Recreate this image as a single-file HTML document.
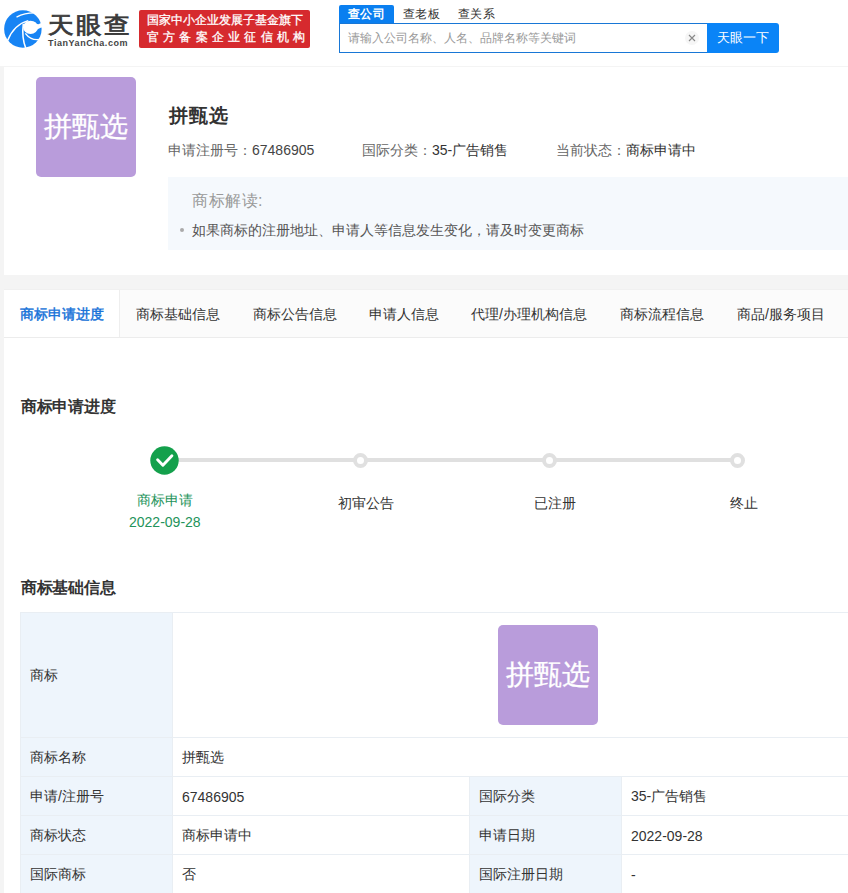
<!DOCTYPE html>
<html><head><meta charset="utf-8">
<style>
*{margin:0;padding:0;box-sizing:border-box}
html,body{width:848px;height:893px;overflow:hidden;background:#fff;font-family:"Liberation Sans",sans-serif;color:#333}
.a{position:absolute;white-space:nowrap}
#hdr{position:absolute;left:0;top:0;width:848px;height:66px;background:#fff}
#pagebg{position:absolute;left:0;top:66px;width:848px;height:827px;background:#f4f4f4}
#card1{position:absolute;left:4px;top:67px;width:844px;height:208px;background:#fff}
#tabs{position:absolute;left:4px;top:289px;width:844px;height:49px;background:#fafafa;border-top:1px solid #f0f0f0;border-bottom:1px solid #ececec;background:#fbfbfb}
#main{position:absolute;left:4px;top:338px;width:844px;height:555px;background:#fff}
.logo{position:absolute;width:100px;height:100px;border-radius:5px;background:#b99cdb;color:#fff;font-size:28px;text-align:center;line-height:100px;-webkit-text-stroke:0.3px #fff}
.tab{position:absolute;top:0;height:47px;line-height:47px;padding-top:0.6px;font-size:14px;color:#333}
.sec{position:absolute;font-size:16px;font-weight:bold;color:#333}
table{position:absolute;left:20px;top:612px;border-collapse:collapse;width:905px;font-size:14px}
td{border:1px solid #e9eef3;height:39px;padding-left:9px;padding-top:2px;color:#333}
td.l{background:#eef5fc;width:152px}
</style></head><body>
<div id="hdr">
  <svg class="a" style="left:0;top:5px" width="50" height="50" viewBox="0 0 848 848">
    <circle cx="388" cy="407" r="318" fill="#1784f4"/>
    <ellipse cx="518" cy="378" rx="126" ry="112" fill="#fff"/>
    <path d="M600 320 L650 325 L740 290 L740 375 L690 385 L620 420 Z" fill="#fff"/>
    <path d="M130 600 Q240 330 480 265" stroke="#fff" stroke-width="26" fill="none"/>
    <path d="M395 320 Q365 560 440 740" stroke="#fff" stroke-width="26" fill="none"/>
    <path d="M280 205 Q420 135 580 135" stroke="#fff" stroke-width="22" fill="none"/>
    <path d="M430 480 Q520 600 660 585" stroke="#fff" stroke-width="24" fill="none"/>
  </svg>
  <div class="a" style="left:47.5px;top:10.5px;font-size:23px;line-height:28px;color:#3a3a3a;letter-spacing:2px;-webkit-text-stroke:0.8px #3a3a3a;transform:scaleX(1.12);transform-origin:0 0">天眼查</div>
  <div class="a" style="left:48px;top:37px;font-size:9px;line-height:12px;color:#444;letter-spacing:0.55px;font-weight:bold">TianYanCha.com</div>
  <div class="a" style="left:139px;top:10px;width:171px;height:38px;background:#d62a2e;border-radius:2px;color:#fff;font-size:12px;line-height:17px;padding-top:2px;text-align:center;-webkit-text-stroke:0.3px #fff">国家中小企业发展子基金旗下<br><span style="letter-spacing:4.25px;margin-left:7px">官方备案企业征信机构</span></div>
  <div class="a" style="left:339px;top:5px;width:55px;height:19px;background:#0a7ff0;border-radius:2px 2px 0 0;color:#fff;font-size:12px;font-weight:bold;text-align:center;line-height:19px;letter-spacing:0.3px">查公司</div>
  <div class="a" style="left:403px;top:5px;font-size:12px;color:#333;line-height:19px;letter-spacing:0.3px">查老板</div>
  <div class="a" style="left:458px;top:5px;font-size:12px;color:#333;line-height:19px;letter-spacing:0.3px">查关系</div>
  <div class="a" style="left:339px;top:23px;width:370px;height:30px;border:1px solid #1877d6;border-right:none;background:#fff"></div>
  <div class="a" style="left:348px;top:24px;line-height:29px;font-size:12px;color:#999">请输入公司名称、人名、品牌名称等关键词</div>
  <div class="a" style="left:685px;top:31px;width:14px;height:14px;border-radius:7px;background:#f6f6f6"></div><svg class="a" style="left:687px;top:33px" width="10" height="10" viewBox="0 0 10 10"><path d="M2 2L8 8M8 2L2 8" stroke="#888" stroke-width="1.15"/></svg>
  <div class="a" style="left:707px;top:23px;width:72px;height:30px;background:#0a84f7;border-radius:0 3px 3px 0;color:#fff;font-size:13px;text-align:center;line-height:29px;letter-spacing:0.2px">天眼一下</div>
</div>
<div id="pagebg"></div>
<div id="card1">
  <div class="logo" style="left:32px;top:10px">拼甄选</div>
  <div class="a" style="left:165px;top:36px;font-size:19px;font-weight:bold;color:#333;letter-spacing:0.8px">拼甄选</div>
  <div class="a" style="left:164px;top:75px;font-size:14px;color:#666">申请注册号：<span style="color:#444">67486905</span></div>
  <div class="a" style="left:358px;top:75px;font-size:14px;color:#666">国际分类：<span style="color:#333">35-广告销售</span></div>
  <div class="a" style="left:552px;top:75px;font-size:14px;color:#666">当前状态：<span style="color:#333">商标申请中</span></div>
  <div class="a" style="left:164px;top:110px;width:690px;height:73px;background:#f5f9fd"></div>
  <div class="a" style="left:188px;top:124px;font-size:16px;color:#999;letter-spacing:0.5px">商标解读:</div>
  <div class="a" style="left:176px;top:161px;width:4px;height:4px;border-radius:2px;background:#aaa"></div><div class="a" style="left:188px;top:155px;font-size:14px;color:#555">如果商标的注册地址、申请人等信息发生变化，请及时变更商标</div>
</div>
<div id="tabs">
  <div class="tab" style="left:0;width:116px;background:#fff;color:#1672d8;text-align:center;-webkit-text-stroke:0.45px #1672d8;border-right:1px solid #eee">商标申请进度</div>
  <div class="tab" style="left:132px">商标基础信息</div>
  <div class="tab" style="left:249px">商标公告信息</div>
  <div class="tab" style="left:365px">申请人信息</div>
  <div class="tab" style="left:467px">代理/办理机构信息</div>
  <div class="tab" style="left:616px">商标流程信息</div>
  <div class="tab" style="left:733px">商品/服务项目</div>
</div>
<div id="main"></div>
<div class="sec" style="left:21px;top:397px;letter-spacing:-0.3px">商标申请进度</div>
<div class="a" style="left:170px;top:458px;width:566px;height:4px;background:#e0e0e0"></div>
<svg class="a" style="left:150px;top:446px" width="29" height="29" viewBox="0 0 29 29"><circle cx="14.5" cy="14.5" r="14.2" fill="#14a04c"/><path d="M7.6 13.8L12.9 19.2L21.9 9.8" stroke="#fff" stroke-width="2.9" fill="none" stroke-linecap="round" stroke-linejoin="round"/></svg>
<div class="a" style="left:352.5px;top:452.5px;width:15px;height:15px;border-radius:8px;background:#fff;border:4.5px solid #e0e0e0"></div>
<div class="a" style="left:542px;top:452.5px;width:15px;height:15px;border-radius:8px;background:#fff;border:4.5px solid #e0e0e0"></div>
<div class="a" style="left:730px;top:452.5px;width:15px;height:15px;border-radius:8px;background:#fff;border:4.5px solid #e0e0e0"></div>
<div class="a" style="left:137px;top:492px;font-size:14px;color:#23935a">商标申请</div>
<div class="a" style="left:129px;top:514px;font-size:14px;color:#23935a">2022-09-28</div>
<div class="a" style="left:338px;top:495px;font-size:14px;color:#333">初审公告</div>
<div class="a" style="left:534px;top:495px;font-size:14px;color:#333">已注册</div>
<div class="a" style="left:730px;top:495px;font-size:14px;color:#333">终止</div>
<div class="sec" style="left:21px;top:578px;letter-spacing:-0.3px">商标基础信息</div>
<table>
<tr><td class="l" style="height:125px">商标</td><td colspan="3" style="position:relative"><div class="logo" style="left:325px;top:12px">拼甄选</div></td></tr>
<tr><td class="l">商标名称</td><td colspan="3">拼甄选</td></tr>
<tr><td class="l">申请/注册号</td><td style="width:297px">67486905</td><td class="l">国际分类</td><td>35-广告销售</td></tr>
<tr><td class="l">商标状态</td><td>商标申请中</td><td class="l">申请日期</td><td>2022-09-28</td></tr>
<tr><td class="l">国际商标</td><td>否</td><td class="l">国际注册日期</td><td>-</td></tr>
</table>
</body></html>
